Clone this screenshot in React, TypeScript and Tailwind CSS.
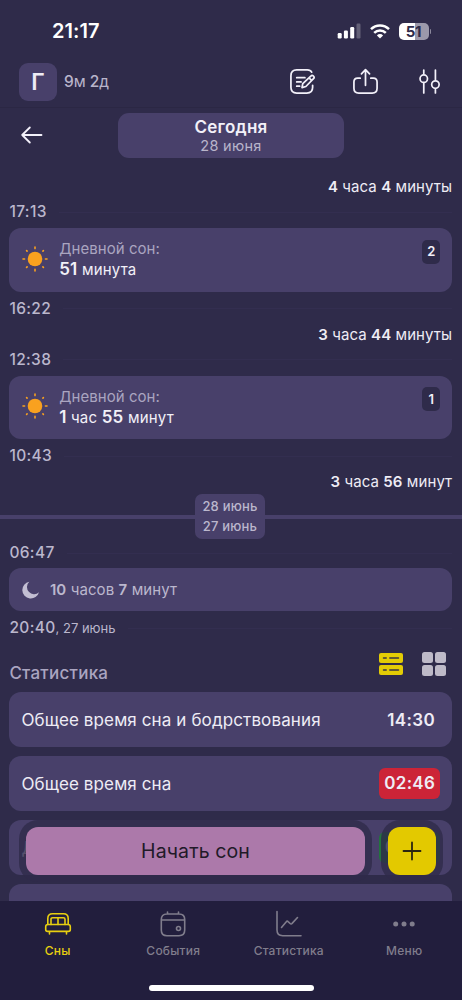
import type { ReactNode } from "react";

const B = ({ children }: { children: ReactNode }) => <span className="font-semibold">{children}</span>;

function StatusBar() {
  return (
    <div className="flex h-[62px] shrink-0 items-center pl-[52px] pr-[31px]">
      <span className="text-[20px] font-semibold leading-6 tracking-[0.05px] text-white">21:17</span>
      <div className="ml-auto flex items-center gap-[9px]">
        <svg width="24" height="16" viewBox="0 0 24 16" fill="#fff">
          <rect x="0.7" y="10" width="4" height="5.5" rx="1.2" />
          <rect x="6.9" y="7.500" width="4" height="8" rx="1.2" />
          <rect x="13.200" y="4" width="4" height="11.5" rx="1.2" />
          <rect x="19.500" y="0.500" width="4" height="15" rx="1.2" opacity="0.25" />
        </svg>
        <svg width="20" height="15" viewBox="0 0 20 15" fill="none" stroke="#fff" strokeWidth="2.5">
          <path d="M1 5.2a12.8 12.8 0 0 1 18 0" />
          <path d="M4.2 8.800a8.200 8.200 0 0 1 11.600 0" />
          <path d="M10 14.600 6.900 11.400a4.400 4.400 0 0 1 6.200 0Z" fill="#fff" stroke="none" />
        </svg>
        <div className="flex items-center gap-px">
          <div className="flex h-[17px] w-[30px] items-center justify-center rounded-[5px] bg-[linear-gradient(90deg,#fff_52%,#9c99ab_52%)] text-[15px] font-bold leading-none tracking-[-0.4px] text-[#2f2b4a]">
            51
          </div>
          <div className="h-[5px] w-[1.5px] rounded-r bg-[#8b889c]" />
        </div>
      </div>
    </div>
  );
}

function Toolbar() {
  return (
    <div className="flex h-[46px] shrink-0 items-center border-b border-[#2b2744] pl-[19px] pr-[22.5px]">
      <div className="mt-[-5px] flex h-[38px] w-[38px] items-center justify-center rounded-[9px] bg-[#48406a] text-[23px] font-semibold text-[#eeecf5]">
        Г
      </div>
      <div className="ml-[7px] mt-[-5px] text-[15.5px] leading-5 tracking-[-0.1px] text-[#b9b5cb]">
        <span className="font-medium">9</span>м <span className="font-medium">2</span>д
      </div>
      <div className="ml-auto mt-[-6px] flex items-center">
        <svg width="27" height="27" viewBox="0 0 28 28" fill="none" stroke="#f3f1fa" strokeWidth="1.8" strokeLinecap="round" strokeLinejoin="round">
          <path d="M23.500 4.300C22.600 2.600 21 2 19 2H8C4 2 2 4 2 8v12c0 4 2 6 6 6h10.500c4 0 6-2 6-6v-2" />
          <path d="M8 10h8.500M8 14.400h4.500M8 18.800h3" />
          <path d="m13.500 20.300.8-4.200 8.300-7.700a1.900 1.900 0 0 1 2.800 2.700L17.500 19.200ZM20.700 10.200l2.800 2.700" />
        </svg>
        <svg className="ml-[36px]" width="27" height="27" viewBox="0 0 28 28" fill="none" stroke="#f3f1fa" strokeWidth="1.8" strokeLinecap="round" strokeLinejoin="round">
          <path d="M8.500 10.500H6c-3 0-4 1.500-4 4V21c0 3.500 1.500 5 5 5h14c3.500 0 5-1.500 5-5v-6.500c0-2.500-1-4-4-4h-2.500" />
          <path d="M14 18V2M9.800 6 14 1.700 18.200 6" />
        </svg>
        <svg className="ml-[40px]" width="21" height="27" viewBox="0 0 22 28" fill="none" stroke="#f3f1fa" strokeWidth="1.8" strokeLinecap="round">
          <path d="M5 2v3.500M5 15.500v10.500M17.200 2v10.500M17.200 22.500v3.500" />
          <circle cx="5" cy="11" r="3.900" />
          <circle cx="17.200" cy="17.200" r="3.900" />
        </svg>
      </div>
    </div>
  );
}

function DateRow() {
  return (
    <div className="flex h-[66px] shrink-0 items-start pl-[21px] pt-[5px]">
      <svg className="mt-[13px]" width="22" height="18" viewBox="0 0 22 18" fill="none" stroke="#f3f1fa" strokeWidth="1.8" strokeLinecap="round" strokeLinejoin="round">
        <path d="M20.500 9H1.200M8.800 1.500 1.200 9l7.600 7.500" />
      </svg>
      <div className="ml-[75.3px] flex h-[45px] w-[225.4px] flex-col items-center rounded-[11px] bg-[#48406a] pt-[3px]">
        <span className="text-[17px] font-semibold leading-[22px] tracking-[0.25px] text-[#f2f0f8]">Сегодня</span>
        <span className="text-[14.5px] leading-[16px] tracking-[0.3px] text-[#b9b5cb]">28 июня</span>
      </div>
    </div>
  );
}

function Gap({ children }: { children: ReactNode }) {
  return <div className="h-[24px] shrink-0 text-right text-[15px] leading-[25px] tracking-[0.08px] text-[#eeecf5]">{children}</div>;
}

function Time({ children, note, start }: { children: ReactNode; note?: string; start?: boolean }) {
  return (
    <div className={`flex h-[26px] shrink-0 items-center text-[15.5px] font-medium leading-5 tracking-[0.35px] text-[#bbb7cd] ${start ? "pt-[2px]" : ""}`}>
      <span>{children}</span>
      {note && <span className="whitespace-pre text-[13px] font-normal tracking-[0]">{note}</span>}
      <div className="ml-3 h-px flex-1 bg-[#332e50]" />
    </div>
  );
}

function Nap({ index, children }: { index: number; children: ReactNode }) {
  return (
    <div className="my-[4px] flex h-[63.5px] shrink-0 items-center rounded-[12px] bg-[#48406a] pl-[13px] pr-[12px]">
      <svg className="mb-[2px]" width="26" height="26" viewBox="0 0 26 26" stroke="#f9a11f" strokeWidth="1.6" strokeLinecap="round">
        <circle cx="13" cy="13" r="7.300" fill="#f9a11f" stroke="none" />
        <path d="M13 1v1.600M13 23.400V25M1 13h1.600M23.400 13H25M4.600 4.600l.5.5M20.900 20.900l.5.5M4.600 21.400l.5-.5M20.900 5.100l.5-.5" />
      </svg>
      <div className="ml-[10.8px] leading-5">
        <div className="text-[15px] tracking-[0.05px] text-[#aaa5c0]">Дневной сон:</div>
        <div className="text-[15px] tracking-[0.2px] text-[#f2f0f8]">{children}</div>
      </div>
      <div className="mb-[16px] ml-auto flex h-[24px] w-[18px] items-center justify-center rounded-[5px] bg-[#2f2b4a] text-[13px] font-semibold text-[#f2f0f8]">
        {index}
      </div>
    </div>
  );
}

function StatCard({ label, children }: { label: string; children: ReactNode }) {
  return (
    <div className="flex h-[55px] shrink-0 items-center justify-between rounded-[12px] bg-[#48406a] px-[12px] text-[17px] text-[#eeecf5]">
      <span className="pt-[2px] tracking-[0.12px]">{label}</span>
      {children}
    </div>
  );
}

function Tab({ label, active, children }: { label: string; active?: boolean; children: ReactNode }) {
  return (
    <div className={`flex flex-1 flex-col items-center ${active ? "text-[#e8cf10]" : "text-[#807d8c]"}`}>
      <svg width="28" height="28" viewBox="0 0 28 28" fill="none" stroke="currentColor" strokeWidth="1.6" strokeLinecap="round" strokeLinejoin="round">
        {children}
      </svg>
      <span className="mt-[5px] text-[12px] font-medium leading-4 tracking-[0.22px]">{label}</span>
    </div>
  );
}

export default function App() {
  return (
    <div className="relative flex h-[1000px] w-[462px] flex-col overflow-hidden bg-[#2f2b4a] font-[Inter,'Noto_Sans',sans-serif]">
      <StatusBar />
      <Toolbar />
      <DateRow />
      <div className="flex min-h-0 flex-1 flex-col overflow-hidden pl-[9.4px] pr-[9.8px]">
        <Gap><B>4</B> часа <B>4</B> минуты</Gap>
        <Time start>17:13</Time>
        <Nap index={2}><span className="text-[17px] font-semibold">51</span> минута</Nap>
        <Time>16:22</Time>
        <Gap><B>3</B> часа <B>44</B> минуты</Gap>
        <Time start>12:38</Time>
        <Nap index={1}><span className="text-[17px] font-semibold">1</span> час <span className="text-[17px] font-semibold">55</span> минут</Nap>
        <Time>10:43</Time>
        <Gap><B>3</B> часа <B>56</B> минут</Gap>
        <div className="-ml-[9.4px] -mr-[9.8px] mt-px flex h-[45px] shrink-0 items-center">
          <div className="h-[4px] w-[195px] bg-[#48406a]" />
          <div className="h-[45px] w-[70px] rounded-[7px] bg-[#48406a] pt-[3px] text-center text-[13px] font-medium leading-[19.5px] tracking-[0.2px] text-[#bbb7cd]">
            <div>28 июнь</div>
            <div>27 июнь</div>
          </div>
          <div className="h-[4px] flex-1 bg-[#48406a]" />
        </div>
        <Time start>06:47</Time>
        <div className="mb-[4px] mt-[3px] flex h-[43px] shrink-0 items-center rounded-[12px] bg-[#48406a] pl-[13px] text-[15px] tracking-[0.1px] text-[#bbb7cd]">
          <svg width="18" height="18" viewBox="0 0 18 18" fill="#c3bfd3">
            <path d="M7.300.7A8.500 8.500 0 1 0 17 11.300 6.300 6.300 0 0 1 7.300.7Z" />
          </svg>
          <span className="ml-[9.5px] pt-px"><B>10</B> часов <B>7</B> минут</span>
        </div>
        <Time note=", 27 июнь">20:40</Time>
        <div className="flex h-[51px] shrink-0 items-center pr-[6.500px]">
          <span className="mt-[12px] text-[17px] font-medium leading-6 tracking-[0.25px] text-[#aaa5c0]">Статистика</span>
          <svg className="ml-auto mt-[-5px]" width="24" height="22" viewBox="0 0 24 22">
            <rect width="24" height="10" rx="2" fill="#e3cc05" />
            <rect y="12" width="24" height="10" rx="2" fill="#e3cc05" />
            <path d="M4.500 5h2.700M10.800 5h8.700M4.500 17h2.700M10.800 17h8.700" stroke="#3a3340" strokeWidth="1.5" strokeLinecap="round" />
          </svg>
          <svg className="ml-[18.5px] mt-[-5px]" width="24" height="24" viewBox="0 0 24 24" fill="#bebac8">
            <rect width="11" height="11" rx="2.500" />
            <rect x="13" width="11" height="11" rx="2.500" />
            <rect y="13" width="11" height="11" rx="2.500" />
            <rect x="13" y="13" width="11" height="11" rx="2.500" />
          </svg>
        </div>
        <div className="flex shrink-0 flex-col gap-[9px]">
          <StatCard label="Общее время сна и бодрствования">
            <span className="mr-[5px] pt-[2px] font-semibold tracking-[0.4px]">14:30</span>
          </StatCard>
          <StatCard label="Общее время сна">
            <span className="flex h-[31px] w-[61px] items-center justify-center rounded-[6px] bg-[#cc2437] pt-px font-semibold tracking-[0.3px]">02:46</span>
          </StatCard>
          <StatCard label="Дневной сон">
            <span className="flex h-[31px] w-[61px] items-center justify-center rounded-[6px] bg-[#22743e] font-semibold">02:46</span>
          </StatCard>
          <StatCard label="">{null}</StatCard>
        </div>
      </div>

      <div className="absolute left-[26px] top-[827px] flex items-center gap-[23px]">
        <button className="h-[48px] w-[339px] rounded-[12px] bg-[#ac79aa] pt-[2px] text-[19.5px] font-normal tracking-[0.1px] text-[#211a28] shadow-[0_0_0_7px_rgba(47,43,74,0.8)]">
          Начать сон
        </button>
        <button className="flex h-[48px] w-[48px] items-center justify-center rounded-[12px] bg-[#e3c900] shadow-[0_0_0_7px_rgba(47,43,74,0.8)]">
          <svg className="-mt-px" width="20" height="20" viewBox="0 0 20 20" stroke="#2b2510" strokeWidth="1.8" strokeLinecap="round">
            <path d="M1.500 10h17M10 1.500v17" />
          </svg>
        </button>
      </div>

      <nav className="flex h-[99px] shrink-0 flex-col items-center bg-[#221e3d] pt-[9px]">
        <div className="flex w-full">
          <Tab label="Сны" active>
            <path d="M3.800 14.500V8.500c0-3 1.700-4.700 4.700-4.700h11c3 0 4.700 1.700 4.700 4.700v6" />
            <path d="M7 14.500v-5.200c0-1 .6-1.600 1.600-1.600h10.800c1 0 1.600.6 1.600 1.600v5.200M14 7.700v6.800" />
            <path d="M4 14.500h20c1.400 0 2.300.8 2.300 2.200v2.800c0 1.200-.7 1.900-1.800 1.900h-21c-1.100 0-1.800-.7-1.800-1.900v-2.800c0-1.400.9-2.200 2.300-2.200ZM5.500 21.500v2.500M22.500 21.500v2.500" />
          </Tab>
          <Tab label="События">
            <path d="M8 4h12c4 0 5.700 2 5.700 5.500v10.500c0 4-1.700 5.700-5.700 5.700H8c-4 0-5.700-1.700-5.700-5.700V9.500C2.300 6 4 4 8 4ZM2.300 10h23.400M8.500 2v2M19.500 2v2" />
            <circle cx="19.500" cy="18.500" r="2" />
          </Tab>
          <Tab label="Статистика">
            <path d="M2 1.500v18.500c0 4 1.700 5.700 5.700 5.700h18.300M6.500 17.500l4.800-5.800c.5-.7 1.200-.7 1.800-.1l2 1.900c.7.700 1.400.6 2-.1L22.500 7.500" />
          </Tab>
          <Tab label="Меню">
            <g fill="currentColor" stroke="none">
              <circle cx="5.700" cy="14" r="2.500" />
              <circle cx="14" cy="14" r="2.500" />
              <circle cx="22.200" cy="14" r="2.500" />
            </g>
          </Tab>
        </div>
        <div className="mt-[26px] h-[6px] w-[165px] rounded-full bg-white" />
      </nav>
    </div>
  );
}
